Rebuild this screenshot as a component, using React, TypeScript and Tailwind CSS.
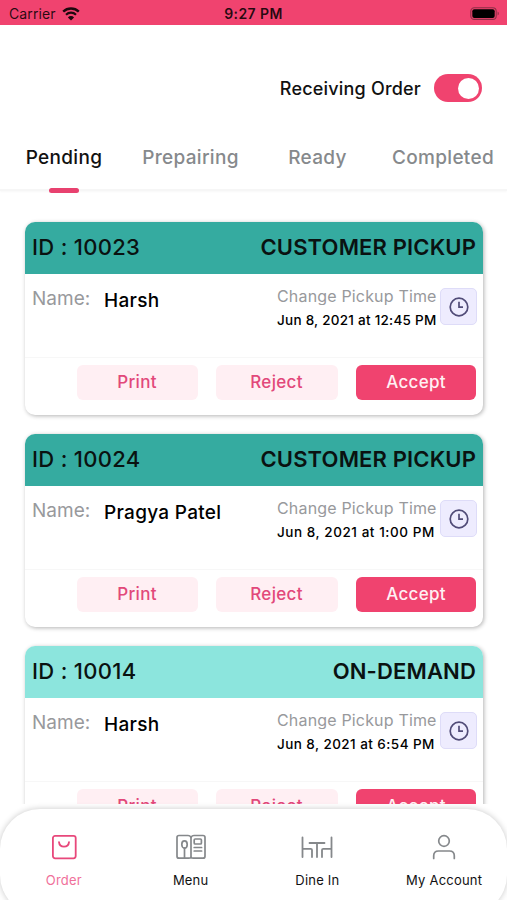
import React from "react";
import clsx from "clsx";

type OrderType = {
  id: string;
  kind: string;
  name: string;
  time: string;
  timeClass: string;
  header: string;
};

type TabType = {
  label: string;
  className: string;
};

const tabs: Array<TabType> = [
  { label: "Pending", className: "ml-[26px] w-[76px]" },
  { label: "Prepairing", className: "ml-[40px] w-[97px]" },
  { label: "Ready", className: "ml-[50px] w-[57px]" },
  { label: "Completed", className: "ml-[46px] w-[102px]" },
];

const orders: Array<OrderType> = [
  {
    id: "10023",
    kind: "CUSTOMER PICKUP",
    name: "Harsh",
    time: "Jun 8, 2021 at 12:45 PM",
    timeClass: "tracking-[0.26px]",
    header: "bg-[#35aba0]",
  },
  {
    id: "10024",
    kind: "CUSTOMER PICKUP",
    name: "Pragya Patel",
    time: "Jun 8, 2021 at 1:00 PM",
    timeClass: "tracking-[0.56px]",
    header: "bg-[#35aba0]",
  },
  {
    id: "10014",
    kind: "ON-DEMAND",
    name: "Harsh",
    time: "Jun 8, 2021 at 6:54 PM",
    timeClass: "tracking-[0.44px]",
    header: "bg-[#8ce5dd]",
  },
];

const StatusBar: React.FC = () => {
  return (
    <div className="grid h-[25px] shrink-0 grid-cols-3 items-center bg-[#f0436f] pt-[2px] text-black/85">
      <div className="flex items-center gap-[6px] pl-[9px]">
        <span className="text-[14px] tracking-[0.1px]">Carrier</span>
        <svg width="18" height="14" viewBox="0 0 18 14" fill="none">
          <path d="M1.2 4.6a11.3 11.3 0 0 1 15.6 0" stroke="#1c080d" strokeWidth="2.4" />
          <path d="M4 7.7a7.2 7.2 0 0 1 10 0" stroke="#1c080d" strokeWidth="2.2" />
          <path d="M9 13.6 5.9 10.4a4.4 4.4 0 0 1 6.2 0z" fill="#1c080d" />
        </svg>
      </div>
      <span className="text-center text-[14px] font-semibold tracking-[0.4px]">9:27 PM</span>
      <div className="flex justify-end pr-[7px]">
        <svg width="30" height="14" viewBox="0 0 30 14">
          <rect x="0.8" y="0.8" width="25.4" height="11.6" rx="3.5" fill="none" stroke="#8d2f46" strokeWidth="1.1" />
          <rect x="2.3" y="2.2" width="22.4" height="8.8" rx="2" fill="#000" />
          <path d="M27.6 4.6c1.6.6 1.6 3.4 0 4z" fill="#8d2f46" />
        </svg>
      </div>
    </div>
  );
};

const ClockIcon: React.FC = () => {
  return (
    <svg width="20" height="20" viewBox="0 0 20 20" fill="none" stroke="#514c78" strokeWidth="1.7">
      <circle cx="10" cy="10" r="8.8" />
      <path d="M10 4.8v5.4h4" />
    </svg>
  );
};

const OrderCard: React.FC<{ order: OrderType }> = ({ order }) => {
  return (
    <div className="flex h-[193px] shrink-0 flex-col overflow-hidden rounded-[10px] bg-white shadow-[1px_1px_4px_rgba(0,0,0,0.3)]">
      <div
        className={clsx(
          "flex h-[52px] shrink-0 items-center justify-between pr-[7px] pb-[1px] pl-[7px] text-[22px] font-medium text-[#0a1211]",
          order.header
        )}
      >
        <span className="tracking-[0.3px]">ID : {order.id}</span>
        <span className="font-semibold tracking-[0.15px]">{order.kind}</span>
      </div>
      <div className="flex h-[84px] shrink-0 justify-between border-b border-[#f7f7f7] pr-[6px] pl-[7px]">
        <div className="flex">
          <span className="mt-[13px] w-[72px] text-[19px] leading-[24px] text-[#98999c]">Name:</span>
          <span className="mt-[15px] text-[19px] leading-[24px] font-medium tracking-[0.3px] text-black">
            {order.name}
          </span>
        </div>
        <div className="flex gap-[3px] pt-[14px]">
          <div className="w-[162px] pl-[2px]">
            <p className="-mt-[1px] h-[18px] overflow-hidden text-[16px] leading-[18px] tracking-[0.17px] whitespace-nowrap text-[#98999c]">
              Change Pickup Time
            </p>
            <p
              className={clsx(
                "mt-[6px] text-[13.5px] leading-[18px] font-medium whitespace-nowrap text-black",
                order.timeClass
              )}
            >
              {order.time}
            </p>
          </div>
          <button className="flex h-[37px] w-[37px] items-center justify-center rounded-[5px] border border-[#dedcf8] bg-[#eeecfe]">
            <ClockIcon />
          </button>
        </div>
      </div>
      <div className="flex gap-[18px] pt-[7px] pr-[7px] pl-[52px] text-[17px] font-medium tracking-[0.3px]">
        <button className="h-[35px] w-[121px] rounded-[6px] bg-[#ffeff3] pt-[1px] pr-[1px] text-[#e2487a]">Print</button>
        <button className="h-[35px] w-[122px] rounded-[6px] bg-[#ffeff3] pt-[1px] pr-[1px] text-[#e2487a]">Reject</button>
        <button className="h-[35px] w-[120px] rounded-[6px] bg-[#f0436f] pt-[1px] text-[#fff0f4]">Accept</button>
      </div>
    </div>
  );
};

const BagIcon: React.FC = () => {
  return (
    <svg width="26" height="26" viewBox="0 0 26 26" fill="none" stroke="#e8487b" strokeWidth="1.8" strokeLinecap="round">
      <rect x="1.9" y="1.9" width="22.8" height="22.4" rx="2.2" />
      <path d="M8 8.2c.6 6 9.4 6 10 0" />
    </svg>
  );
};

const MenuIcon: React.FC = () => {
  return (
    <svg width="30" height="26" viewBox="0 0 30 26" fill="none" stroke="#85888b" strokeWidth="1.7" strokeLinecap="round">
      <path d="M15 3.2c-.8-1.2-1.8-1.7-3-1.7H3c-1.200 0-2 .8-2 2v18.700c0 1.200.8 2 2 2h9.500c1 0 1.900 0 2.500-.7.600.7 1.500.7 2.500.7H27c1.200 0 2-.8 2-2V3.500c0-1.200-.8-2-2-2h-9c-1.200 0-2.200.5-3 1.700z" />
      <path d="M15 3.500v20" />
      <ellipse cx="8.5" cy="10.5" rx="2.7" ry="3.6" />
      <path d="M8.500 14.200v9.500" />
      <rect x="18.200" y="5" width="7.200" height="5" rx="1" />
      <path d="M18.200 13.500h7.400M18.200 17h7.400" />
    </svg>
  );
};

const DineIcon: React.FC = () => {
  return (
    <svg width="32" height="26" viewBox="0 0 32 26" fill="none" stroke="#85888b" strokeWidth="1.8" strokeLinecap="round">
      <path d="M1.500 3.400v19.600M1.500 14.800h8.200q1.300 0 1.300 1.300v6.900" />
      <path d="M30.500 3.400v19.600M30.500 14.800h-8.200q-1.300 0-1.300 1.300v6.900" />
      <path d="M8.500 9h15M16 9v14" />
    </svg>
  );
};

const AccountIcon: React.FC = () => {
  return (
    <svg width="24" height="26" viewBox="0 0 24 26" fill="none" stroke="#85888b" strokeWidth="1.7" strokeLinecap="round">
      <circle cx="12" cy="7" r="5.3" />
      <path d="M1.700 24.400v-2.600c0-2.900 1.900-4.800 4.800-4.800h11c2.900 0 4.800 1.900 4.800 4.800v2.600" />
    </svg>
  );
};

const navItems = [
  { label: "Order", icon: <BagIcon />, active: true },
  { label: "Menu", icon: <MenuIcon />, active: false },
  { label: "Dine In", icon: <DineIcon />, active: false },
  { label: "My Account", icon: <AccountIcon />, active: false },
];

const App: React.FC = () => {
  return (
    <div className="flex h-[900px] w-[507px] flex-col overflow-hidden bg-white font-[Inter,'Liberation_Sans',sans-serif]">
      <StatusBar />

      <div className="flex h-[105px] shrink-0 items-center justify-end gap-[13px] pt-[21px] pr-[25px]">
        <span className="text-[18px] font-medium tracking-[0.2px] text-[#111]">Receiving Order</span>
        <button className="flex h-[28px] w-[48px] items-center justify-end rounded-full bg-[#f0436f] pr-[3px]">
          <span className="h-[21px] w-[21px] rounded-full bg-white" />
        </button>
      </div>

      <div className="flex h-[61px] shrink-0 border-b-2 border-[#f6f6f6] shadow-[0_1px_2px_rgba(0,0,0,0.03)]">
        {tabs.map((tab, i) => (
          <div key={tab.label} className={clsx("relative flex flex-col items-center", tab.className)}>
            <span
              className={clsx(
                "mt-[16px] text-[19px] leading-[24px] font-medium tracking-[0.3px] whitespace-nowrap",
                i === 0 ? "text-[#111]" : "text-[#86898c]"
              )}
            >
              {tab.label}
            </span>
            {i === 0 && <span className="absolute -bottom-[4px] h-[5px] w-[30px] rounded-full bg-[#e8416f]" />}
          </div>
        ))}
      </div>

      <div className="flex h-[613px] shrink-0 flex-col gap-[19px] overflow-hidden pt-[31px] pr-[24px] pl-[25px]">
        {orders.map((order) => (
          <OrderCard key={order.id} order={order} />
        ))}
      </div>

      {/* Bottom navigation, its lower corners run past the screen edge */}
      <div className="mt-[5px] flex h-[106px] shrink-0 rounded-[40px] bg-white shadow-[0_0_6px_rgba(0,0,0,0.22)]">
        {navItems.map((item) => (
          <div key={item.label} className="flex flex-1 flex-col items-center pt-[25px] pl-[1px]">
            {item.icon}
            <span
              className={clsx(
                "mt-[12px] text-[13px] leading-[16px] tracking-[0.2px]",
                item.active ? "text-[#f0709a]" : "text-[#111]"
              )}
            >
              {item.label}
            </span>
          </div>
        ))}
      </div>
    </div>
  );
};

export default App;
